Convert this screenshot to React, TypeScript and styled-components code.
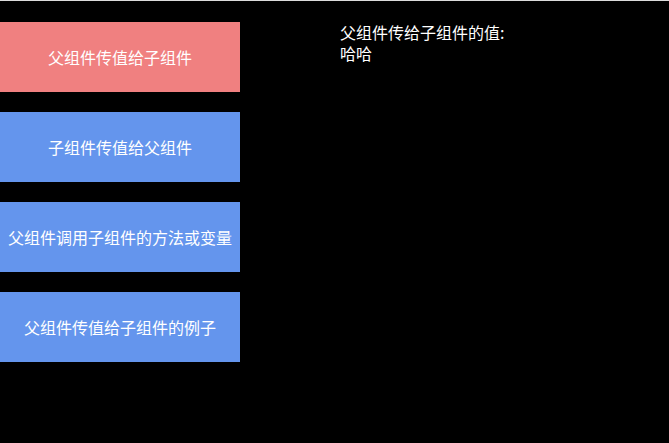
import React, { useState } from "react";
import styled, { createGlobalStyle } from "styled-components";

const GlobalStyle = createGlobalStyle`
  html, body {
    margin: 0;
    padding: 0;
    background: #000;
  }
  body {
    font-family: "Noto Sans CJK SC", "Noto Sans", sans-serif;
  }
`;

const Page = styled.div`
  min-height: 100vh;
  box-sizing: border-box;
  border-top: 1px solid #dcdcdc;
  background: #000;
  display: flex;
  align-items: flex-start;
`;

const Menu = styled.div`
  width: 240px;
  display: flex;
  flex-direction: column;
  gap: 20px;
  padding-top: 21px;
`;

const MenuItem = styled.div<{ $active?: boolean }>`
  height: 70px;
  display: flex;
  align-items: center;
  justify-content: center;
  background: ${(p) => (p.$active ? "#f08080" : "#6495ed")};
  color: #fff;
  font-size: 16px;
  cursor: pointer;
  white-space: nowrap;
`;

const Content = styled.div`
  margin-left: 100px;
  padding-top: 21px;
  color: #fff;
  font-size: 16px;
  line-height: 21px;
`;

const Line = styled.div`
  height: 21px;
  overflow: visible;
`;

const items = [
  "父组件传值给子组件",
  "子组件传值给父组件",
  "父组件调用子组件的方法或变量",
  "父组件传值给子组件的例子",
];

export default function App() {
  const [active, setActive] = useState(0);
  return (
    <>
      <GlobalStyle />
      <Page>
        <Menu>
          {items.map((label, i) => (
            <MenuItem key={label} $active={i === active} onClick={() => setActive(i)}>
              {label}
            </MenuItem>
          ))}
        </Menu>
        <Content>
          <Line>父组件传给子组件的值:</Line>
          <Line>哈哈</Line>
        </Content>
      </Page>
    </>
  );
}
